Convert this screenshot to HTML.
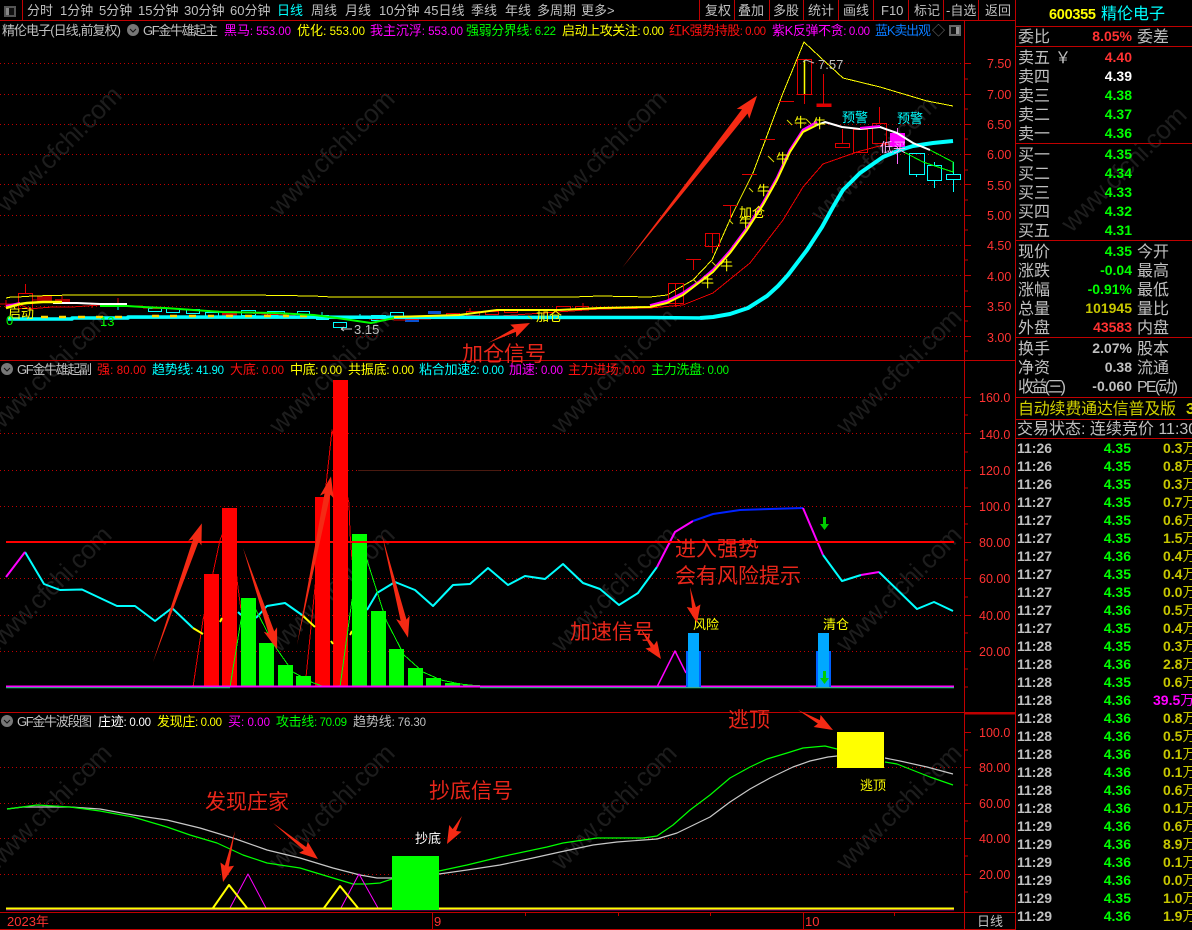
<!DOCTYPE html>
<html><head><meta charset="utf-8"><style>
html,body{margin:0;padding:0;background:#000;width:1192px;height:930px;overflow:hidden}
svg{display:block}
text{font-family:"Liberation Sans","WenQuanYi Zen Hei","Noto Sans CJK SC",sans-serif;font-size:13px;white-space:pre}
.g{fill:#c0c0c0}.r{fill:#ff3232}.R{fill:#ff1010}.y{fill:#ffff00}.m{fill:#ff00ff}.c{fill:#00ffff}.l{fill:#00ff00}.w{fill:#fff}
.ax text{fill:#ff3232;font-size:12.5px}
.lb{font-size:16px;fill:#c0c0c0}
.v{font-size:14px;font-weight:bold;text-anchor:end}
.t{font-size:14px;font-weight:bold;fill:#c0c0c0}
.k{font-size:14px;font-weight:bold;fill:#c8c800}
.k tspan{font-weight:normal;font-size:14px}
.an{font-size:21px;fill:#e8261a}
.wm text{font-size:26px;fill:#1d1d1d;text-anchor:middle}
.th{fill:none;stroke-width:1;shape-rendering:crispEdges}
.n{font-size:11.5px}
polyline{stroke-linejoin:round}
</style></head><body>
<svg width="1192" height="930" viewBox="0 0 1192 930" xmlns="http://www.w3.org/2000/svg">
<rect width="1192" height="930" fill="#000"/>
<g class="wm">
<text transform="translate(65 155) rotate(-45)" textLength="165">www.cfchi.com</text>
<text transform="translate(338 159) rotate(-45)" textLength="165">www.cfchi.com</text>
<text transform="translate(610 159) rotate(-45)" textLength="165">www.cfchi.com</text>
<text transform="translate(880 165) rotate(-45)" textLength="165">www.cfchi.com</text>
<text transform="translate(1130 175) rotate(-45)" textLength="165">www.cfchi.com</text>
<text transform="translate(55 377) rotate(-45)" textLength="165">www.cfchi.com</text>
<text transform="translate(338 377) rotate(-45)" textLength="165">www.cfchi.com</text>
<text transform="translate(620 377) rotate(-45)" textLength="165">www.cfchi.com</text>
<text transform="translate(905 377) rotate(-45)" textLength="165">www.cfchi.com</text>
<text transform="translate(55 595) rotate(-45)" textLength="165">www.cfchi.com</text>
<text transform="translate(338 595) rotate(-45)" textLength="165">www.cfchi.com</text>
<text transform="translate(620 595) rotate(-45)" textLength="165">www.cfchi.com</text>
<text transform="translate(905 595) rotate(-45)" textLength="165">www.cfchi.com</text>
<text transform="translate(55 813) rotate(-45)" textLength="165">www.cfchi.com</text>
<text transform="translate(338 813) rotate(-45)" textLength="165">www.cfchi.com</text>
<text transform="translate(620 813) rotate(-45)" textLength="165">www.cfchi.com</text>
<text transform="translate(905 813) rotate(-45)" textLength="165">www.cfchi.com</text>
</g>

<!-- grid -->
<g stroke="#c00000" stroke-width="1" stroke-dasharray="1 3" fill="none">
<path d="M0 63.500H964M0 94.500H964M0 124.500H964M0 154.500H964M0 184.500H964M0 215.500H964M0 245.500H964M0 275.500H964M0 306.500H964M0 336.500H964"/>
<path d="M0 397.500H964M0 433.500H964M0 470.500H964M0 506.500H964M0 578.500H964M0 615.500H964M0 651.500H964"/>
<path d="M0 767.500H964M0 803.500H964M0 838.500H964M0 874.500H964"/>
</g>
<path d="M358 470.500H500" stroke="#4a1a10" stroke-width="1"/>

<!-- frames -->
<g fill="none" stroke="#c00000" stroke-width="1">
<path d="M0 20.500H1015M0 360.500H1015M0 712.500H1015M0 912.500H1015M0 929.500H1015"/>
<path d="M22.500 0V20M699.500 0V20M734.500 0V20M769.500 0V20M803.500 0V20M838.500 0V20M873.500 0V20M908.500 0V20M943.500 0V20M978.500 0V20"/>
<path d="M964.500 21V930M1015.500 0V930M432.500 912V930M803.500 912V930"/>
<path d="M965 713.500H1015" stroke-width="2"/>
<path d="M1015 26.500H1192M1015 46.500H1192M1015 143.500H1192M1015 240.500H1192M1015 337.500H1192M1015 397.500H1192M1015 419.500H1192M1015 438.500H1192"/>
<path d="M965 63.500h6M965 79h3M965 94.500h6M965 109h3M965 124.500h6M965 139h3M965 154.500h6M965 170h3M965 184.500h6M965 200h3M965 215.500h6M965 230h3M965 245.500h6M965 260h3M965 275.500h6M965 291h3M965 306.500h6M965 321h3M965 336.500h6M965 351h3"/>
<path d="M965 397.500h6M965 415h3M965 433.500h6M965 452h3M965 470.500h6M965 488h3M965 506.500h6M965 524h3M965 542.500h6M965 560h3M965 578.500h6M965 597h3M965 615.500h6M965 633h3M965 651.500h6M965 669h3M965 687h3"/>
<path d="M965 732.500h6M965 750h3M965 767.500h6M965 785h3M965 803.500h6M965 821h3M965 838.500h6M965 856h3M965 874.500h6M965 892h3"/>
<path d="M525.500 912v4M618.500 912v4M710.500 912v4M894.500 912v4"/>
</g>

<!-- toolbar -->
<rect x="4" y="6" width="12" height="11" fill="#555"/><rect x="6" y="8" width="8" height="7" fill="#111"/><rect x="6" y="8" width="3" height="7" fill="#888"/>
<g class="g">
<text x="27" y="15">分时</text><text x="60" y="15">1分钟</text><text x="99" y="15">5分钟</text><text x="138" y="15">15分钟</text><text x="184" y="15">30分钟</text><text x="230" y="15">60分钟</text>
<text x="277" y="15" class="c">日线</text><text x="311" y="15">周线</text><text x="345" y="15">月线</text><text x="379" y="15">10分钟</text><text x="424" y="15">45日线</text><text x="471" y="15">季线</text><text x="505" y="15">年线</text><text x="537" y="15">多周期</text><text x="581" y="15">更多&gt;</text>
<text x="705" y="15">复权</text><text x="738" y="15">叠加</text><text x="773" y="15">多股</text><text x="808" y="15">统计</text><text x="843" y="15">画线</text><text x="881" y="15">F10</text><text x="914" y="15">标记</text><text x="946" y="15">-自选</text><text x="985" y="15">返回</text>
</g>

<!-- legends -->
<text x="2" y="35" class="g" textLength="119">精伦电子(日线,前复权)</text>
<circle cx="133" cy="30" r="6" fill="#777"/><path d="M130 29l3 3 3-3" stroke="#111" fill="none"/>
<text x="143" y="35" class="g" textLength="75">GF金牛雄起主</text>
<text x="224" y="35" class="m" textLength="67">黑马<tspan class="n">: 553.00</tspan></text>
<text x="297" y="35" class="y" textLength="68">优化<tspan class="n">: 553.00</tspan></text>
<text x="370" y="35" class="m" textLength="93">我主沉浮<tspan class="n">: 553.00</tspan></text>
<text x="466" y="35" class="l" textLength="90">强弱分界线<tspan class="n">: 6.22</tspan></text>
<text x="562" y="35" class="y" textLength="102">启动上攻关注<tspan class="n">: 0.00</tspan></text>
<text x="669" y="35" class="R" textLength="97">红K强势持股<tspan class="n">: 0.00</tspan></text>
<text x="772" y="35" class="m" textLength="98">紫K反弹不贪<tspan class="n">: 0.00</tspan></text>
<text x="875" y="35" fill="#0a7aff" textLength="56">蓝K卖出观</text><text x="932" y="35" fill="#777">◇</text>
<rect x="949" y="25" width="12" height="11" fill="#666"/><rect x="951" y="27" width="8" height="7" fill="#111"/><rect x="956" y="27" width="3" height="7" fill="#999"/>

<circle cx="7" cy="369" r="6" fill="#777"/><path d="M4 368l3 3 3-3" stroke="#111" fill="none"/>
<text x="17" y="374" class="g" textLength="75">GF金牛雄起副</text>
<text x="97" y="374" class="R" textLength="49">强<tspan class="n">: 80.00</tspan></text>
<text x="152" y="374" class="c" textLength="72">趋势线<tspan class="n">: 41.90</tspan></text>
<text x="230" y="374" class="R" textLength="54">大底<tspan class="n">: 0.00</tspan></text>
<text x="290" y="374" class="y" textLength="52">中底<tspan class="n">: 0.00</tspan></text>
<text x="348" y="374" class="y" textLength="66">共振底<tspan class="n">: 0.00</tspan></text>
<text x="419" y="374" class="c" textLength="85">粘合加速<tspan class="n">2: 0.00</tspan></text>
<text x="509" y="374" class="m" textLength="54">加速<tspan class="n">: 0.00</tspan></text>
<text x="568" y="374" class="R" textLength="77">主力进场<tspan class="n">: 0.00</tspan></text>
<text x="651" y="374" class="l" textLength="78">主力洗盘<tspan class="n">: 0.00</tspan></text>

<circle cx="7" cy="721" r="6" fill="#777"/><path d="M4 720l3 3 3-3" stroke="#111" fill="none"/>
<text x="17" y="726" class="g" textLength="75">GF金牛波段图</text>
<text x="98" y="726" class="w" textLength="53">庄迹<tspan class="n">: 0.00</tspan></text>
<text x="157" y="726" class="y" textLength="65">发现庄<tspan class="n">: 0.00</tspan></text>
<text x="228" y="726" class="m" textLength="42">买<tspan class="n">: 0.00</tspan></text>
<text x="276" y="726" class="l" textLength="71">攻击线<tspan class="n">: 70.09</tspan></text>
<text x="353" y="726" class="g" textLength="73">趋势线<tspan class="n">: 76.30</tspan></text>

<!-- axes -->
<g class="ax">
<text x="987" y="68">7.50</text><text x="987" y="99">7.00</text><text x="987" y="129">6.50</text><text x="987" y="159">6.00</text><text x="987" y="190">5.50</text><text x="987" y="220">5.00</text><text x="987" y="250">4.50</text><text x="987" y="281">4.00</text><text x="987" y="311">3.50</text><text x="987" y="342">3.00</text>
<text x="979" y="402">160.0</text><text x="979" y="439">140.0</text><text x="979" y="475">120.0</text><text x="979" y="511">100.0</text><text x="979" y="547">80.00</text><text x="979" y="583">60.00</text><text x="979" y="620">40.00</text><text x="979" y="656">20.00</text>
<text x="979" y="737">100.0</text><text x="979" y="772">80.00</text><text x="979" y="808">60.00</text><text x="979" y="843">40.00</text><text x="979" y="879">20.00</text>
</g>
<text x="7" y="926" class="r">2023年</text><text x="434" y="926" class="r">9</text><text x="805" y="926" class="r">10</text>
<text x="977" y="926" class="g">日线</text>

<!-- TOP CHART candles left -->
<g fill="none" stroke="#e00000" stroke-width="1">
<rect x="18.500" y="293.500" width="14" height="15"/><path d="M25.500 284v10M6 300v8M33 300h4"/>
<path d="M92 303v5M118 298v6M62 296v3"/>
<rect x="446.500" y="313.500" width="13" height="4"/><rect x="466.500" y="311.500" width="13" height="4"/><rect x="485.500" y="311.500" width="13" height="3"/><rect x="504.500" y="309.500" width="13" height="3"/><rect x="556.500" y="306.500" width="14" height="3"/><rect x="575.500" y="306.500" width="13" height="3"/><path d="M470 308v4M583 303v5"/>
</g>
<polyline class="th" stroke="#e00000" points="0,304 18,304 30,309 40,308 53,307 72,307 100,305 130,306 143,306"/>
<rect x="37" y="296" width="15" height="6" fill="#b00000"/><rect x="55" y="299" width="15" height="3" fill="#b00000"/><rect x="222" y="311" width="15" height="5" fill="#d00000"/><rect x="428" y="311" width="13" height="3" fill="#0a50d0"/><rect x="405" y="318" width="14" height="4" fill="#0a50d0"/>
<g fill="none" stroke="#00ffff" stroke-width="1">
<rect x="148.500" y="308.500" width="13" height="3"/><rect x="166.500" y="308.500" width="13" height="4"/><rect x="186.500" y="309.500" width="13" height="4"/><rect x="205.500" y="312.500" width="13" height="4"/><rect x="241.500" y="310.500" width="14" height="5"/><rect x="267.500" y="311.500" width="17" height="4"/><rect x="297.500" y="311.500" width="12" height="3"/><rect x="316.500" y="315.500" width="12" height="4"/><rect x="333.500" y="322.500" width="13" height="5"/><rect x="371.500" y="315.500" width="14" height="5"/><rect x="390.500" y="312.500" width="13" height="5"/>
<path d="M118 304v6M322 312v7M360 314v5"/>
</g>
<!-- TOP thin lines -->
<polyline class="th" stroke="#ffff00" points="6,298 11,297 18,297 33,296 72,295 250,295 313,296 332,297 573,297 600,296 650,297 667,295 693,280 712,260 733,213 753,173 783,93 804,42 820,57 843,78 880,87 927,101 953,106"/>
<polyline class="th" stroke="#ee0000" points="143,308 180,309 300,316 400,320 500,316 600,309 650,308 683,305 713,293 750,263 783,220 803,187 823,164 857,152 883,145 895,143"/>
<!-- candles right -->
<g fill="none" stroke="#e00000" stroke-width="1">
<rect x="668.500" y="283.500" width="15" height="20"/><path d="M675.500 283v24"/>
<path d="M686 259.500h15M693.500 259v11"/>
<rect x="705.500" y="233.500" width="14" height="13"/><path d="M712.500 233v20"/>
<path d="M723 205.500h15M730.500 205v14M742 174.500h15M760 139.500h15M779 101.500h15"/>
<rect x="797.500" y="59.500" width="14" height="35"/><path d="M804.500 94v10"/>
<path d="M823.500 74v31"/><rect x="817" y="104" width="14" height="2.500" fill="#e00000"/>
<path d="M842.500 129v14"/><rect x="835.500" y="143.500" width="14" height="4"/>
<rect x="853.500" y="129.500" width="14" height="23"/>
<rect x="872.500" y="123.500" width="14" height="20"/><path d="M879.500 107v16"/>
</g>
<path d="M804.500 60v34" stroke="#ffff00" stroke-width="1.500"/>
<path d="M897.500 128v36" stroke="#ff66ff"/><rect x="890" y="133" width="15" height="14" fill="#ff00ff"/>
<g fill="none" stroke="#00ffff" stroke-width="1">
<rect x="909.500" y="153.500" width="15" height="21"/><path d="M916.500 174v3"/>
<rect x="927.500" y="165.500" width="14" height="15"/><path d="M934.500 181v7M934.500 162v3"/>
<rect x="946.500" y="174.500" width="14" height="5"/><path d="M953.500 162v12M953.500 180v12"/>
</g>
<!-- thick lines -->
<polyline fill="none" stroke="#00ffff" stroke-width="3.500" points="8,319 72,319 72,318 128,318 128,317 650,317.500 700,318"/>
<polyline fill="none" stroke="#00ffff" stroke-width="4" points="700,318 713,317 730,314 748,308 767,296 778,286 788,275 807,250 822,227 833,207 843,190 860,173 883,157 900,150 913,146 933,143 953,141"/>
<path d="M41 317h7M59 317h7M78 317h7M96 317h7M115 317h7M152 316h7M170 316h7M189 316h7M208 316h6M226 316h7M245 316h7M264 316h7M283 316h6M300 316h7" stroke="#ffd800" stroke-width="2.500"/>
<polyline fill="none" stroke="#00ff00" stroke-width="2" points="100,306 127,306 143,307 165,308 222,312 275,313 314,315 337,318 371,323 394,318"/>
<polyline fill="none" stroke="#ffffff" stroke-width="2" points="53,303 77,303 100,304 127,304"/>
<polyline fill="none" stroke="#ff00ff" stroke-width="2" points="6,306 20,303"/>
<polyline fill="none" stroke="#ffff00" stroke-width="2.500" points="6,308 20,304 27,303 43,302 62,302"/>
<polyline fill="none" stroke="#ff00ff" stroke-width="2.500" points="650,305.500 667,301 683,293 700,281 713,270 730,251 747,228 763,203 777,178 790,150 803,130 817,122"/>
<polyline fill="none" stroke="#ffff00" stroke-width="2" points="394,317 459,315 497,310 559,310 600,308 650,307 667,303 683,295 700,282 713,272 730,253 747,230 763,205 777,180 790,152 803,132 817,125"/>
<polyline fill="none" stroke="#ffffff" stroke-width="2" points="817,125 825,122 842,127 860,129 880,127 897,133 913,143 930,150"/>
<polyline fill="none" stroke="#ff00ff" stroke-width="2" points="860,128 880,126"/>
<polyline class="th" stroke="#00ff00" points="930,150 953,162 953,172 923,162 900,150"/>
<!-- top labels -->
<g class="y">
<text x="701" y="287">牛</text><text x="720" y="270">牛</text><text x="739" y="227">牛</text><text x="757" y="195">牛</text><text x="776" y="163">牛</text><text x="794" y="127">牛</text><text x="813" y="128">牛</text>
<text x="739" y="217">加仓</text>
<text x="8" y="318" font-size="12">启动</text><text x="536" y="321">加仓</text>
</g>
<path d="M697 283l-4-4M716 266l-4-4M733 224l-4-4M753 192l-4-4M774 162l-6-6M792 125l-5-5M811 124l-5-5M532 319l-4-3" stroke="#d8d800" fill="none"/>
<text x="842" y="122" class="c">预警</text><text x="897" y="123" class="c">预警</text>
<text x="880" y="152" fill="#ffb0ff">低买</text>
<text x="818" y="69" class="g">7.57</text><path d="M803 62l3-2 8 3" stroke="#bbb" fill="none"/>
<text x="6" y="325" class="l" font-size="12">0</text><text x="100" y="326" class="l" font-size="12">13</text>
<text x="354" y="334" class="g">3.15</text><path d="M341 329h11M341 329l3-2M341 329l3 2" stroke="#ccc" fill="none"/>

<!-- MID CHART -->
<polyline class="th" stroke="#ee0000" points="193,687 203,620 220,540 232,510 237,580 241,610"/>
<polyline class="th" stroke="#ee0000" points="305,687 315,587 332,430 349,503 350,533 352,560"/>
<g fill="#ff0000">
<rect x="204" y="574" width="15" height="113"/><rect x="222" y="508" width="15" height="179"/><rect x="315" y="497" width="15" height="190"/><rect x="333" y="380" width="15" height="307"/>
</g>
<polyline fill="none" stroke="#00ffff" stroke-width="2" points="25,552 44,584 60,590 82,589.500 117,606 135,606 155,621 172,608 193,628"/>
<polyline fill="none" stroke="#ff00ff" stroke-width="2" points="6,577 25,552"/>
<polyline fill="none" stroke="#ffff00" stroke-width="2" points="193,628 203,634"/>
<path d="M220 622l2-4" stroke="#ffff00" stroke-width="2"/>
<polyline fill="none" stroke="#00ffff" stroke-width="2" points="238,612 241,615"/>
<polyline fill="none" stroke="#00ffff" stroke-width="2" points="256,618 267,606 285,603 302,615"/>
<polyline fill="none" stroke="#ffff00" stroke-width="2" points="302,615 315,627"/>
<path d="M331 641l2 3M350 635l2-4" stroke="#ffff00" stroke-width="2"/>
<polyline fill="none" stroke="#00ffff" stroke-width="2" points="367,610 377,593 395,582 415,590 433,606 453,585 470,584 488,568 508,585 525,576 545,579 563,564 583,583 600,589 619,605 638,593 657,567"/>
<polyline fill="none" stroke="#ff00ff" stroke-width="2" points="657,567 675,532 693,521"/>
<polyline fill="none" stroke="#0022ff" stroke-width="2" points="693,521 713,514 740,510 770,509 803,508"/>
<polyline fill="none" stroke="#ff00ff" stroke-width="2" points="803,508 823,555"/>
<polyline fill="none" stroke="#00ffff" stroke-width="2" points="823,555 842,581 861,575"/>
<polyline fill="none" stroke="#ff00ff" stroke-width="2" points="861,575 879,572"/>
<polyline fill="none" stroke="#00ffff" stroke-width="2" points="879,572 917,609 934,602 953,611"/>
<g fill="#00ff00">
<rect x="241" y="598" width="15" height="89"/><rect x="259" y="643" width="15" height="44"/><rect x="278" y="665" width="15" height="22"/><rect x="296" y="676" width="15" height="11"/>
<rect x="352" y="534" width="15" height="153"/><rect x="371" y="611" width="15" height="76"/><rect x="389" y="649" width="15" height="38"/><rect x="408" y="668" width="15" height="19"/><rect x="426" y="678" width="15" height="9"/><rect x="445" y="683" width="15" height="4"/><rect x="463" y="685" width="17" height="2"/>
</g>
<polyline class="th" stroke="#00ff00" points="230,687 241,620 256,610 274,645 293,672 311,682 325,687 340,687 352,600 367,560 386,620 404,655 423,672 441,680 460,684 480,686"/>
<path d="M6 686.500H954" stroke="#ff00ff" stroke-width="2"/>
<path d="M6 687.700H230M480 687.700H954" stroke="#00dd66" stroke-width="1"/>
<path d="M6 542H954" stroke="#ff0000" stroke-width="2"/>
<polyline fill="none" stroke="#ff00ff" stroke-width="1.500" points="657,687 675,651 686,673"/>
<rect x="686" y="651" width="15" height="36" fill="#0060ff"/><rect x="688" y="633" width="11" height="54" fill="#00a8ff"/>
<rect x="816" y="651" width="15" height="36" fill="#0060ff"/><rect x="818" y="633" width="11" height="54" fill="#00a8ff"/>
<path d="M823 517h3v7h3l-4.500 6-4.500-6h3zM823 671h3v7h3l-4.500 6-4.500-6h3z" fill="#00cc00"/>
<text x="693" y="629" class="y" font-size="12">风险</text><text x="823" y="629" class="y" font-size="12">清仓</text>

<!-- BOTTOM CHART -->
<polyline fill="none" stroke="#c8c8c8" stroke-width="1.200" points="7,809 23,807 70,807 100,809 133,815 167,820 200,828 233,838 267,850 300,858 333,868 360,875 377,878 392,878"/>
<polyline fill="none" stroke="#00ff00" stroke-width="1.200" points="7,809 37,805 70,807 100,811 133,817 167,827 190,835 217,843 243,855 267,863 300,868 333,878 353,884 367,884 380,883 392,879"/>
<polyline fill="none" stroke="#c8c8c8" stroke-width="1.200" points="439,874 467,870 500,865 533,858 560,852 593,845 617,842 657,839 677,833 710,817 730,802 750,789 770,778 793,767 810,761 828,757 837,756"/>
<polyline fill="none" stroke="#00ff00" stroke-width="1.200" points="439,871 467,865 500,857 547,847 563,843 597,838 643,838 657,836 673,825 690,810 710,795 730,778 750,767 767,759 787,753 803,748 825,746 837,749"/>
<polyline fill="none" stroke="#c8c8c8" stroke-width="1.200" points="885,758 900,761 927,767 953,774"/>
<polyline fill="none" stroke="#00ff00" stroke-width="1.200" points="885,762 897,764 930,777 953,785"/>
<polyline fill="none" stroke="#ff00ff" points="230,908 248,874 266,908"/>
<polyline fill="none" stroke="#ff00ff" points="341,908 359,874 378,908"/>
<polyline fill="none" stroke="#ffff00" stroke-width="2" points="213,908 229,885 247,908"/>
<polyline fill="none" stroke="#ffff00" stroke-width="2" points="324,908 340,886 358,908"/>
<path d="M6 908.500H954" stroke="#ffff00" stroke-width="2"/>
<path d="M6 910H954" stroke="#ff00ff" stroke-width="0.600"/>
<rect x="392" y="856" width="47" height="54" fill="#00ff00"/>
<rect x="837" y="732" width="47" height="36" fill="#ffff00"/>
<text x="415" y="843" class="w" font-size="12">抄底</text><text x="860" y="790" class="y" font-size="12">逃顶</text>

<!-- arrows -->
<g fill="#f42a14">
<polygon transform="translate(622 268) rotate(-51.900)" points="0,0 199,-3.500 196,-8 219,0 196,8 199,3.500"/>
<polygon transform="translate(488 343) rotate(-25.500)" points="0,0 30,-2 28,-7 46.500,0 28,7 30,2"/>
<polygon transform="translate(153 662) rotate(-70.600)" points="0,0 129,-3 126,-7 147,0 126,7 129,3"/>
<polygon transform="translate(243 548) rotate(71.400)" points="0,0 89,-3 86,-7 107,0 86,7 89,3"/>
<polygon transform="translate(297 645) rotate(-78.600)" points="0,0 154,-3 151,-7 172,0 151,7 154,3"/>
<polygon transform="translate(382 535) rotate(75.800)" points="0,0 88,-3 85,-7 106,0 85,7 88,3"/>
<polygon transform="translate(640 628) rotate(55.900)" points="0,0 22,-2 20,-7 37.400,0 20,7 22,2"/>
<polygon transform="translate(690 587) rotate(79)" points="0,0 21,-2 19,-7 36.700,0 19,7 21,2"/>
<polygon transform="translate(235 831) rotate(103.200)" points="0,0 36,-2 34,-7 52.400,0 34,7 36,2"/>
<polygon transform="translate(273 823) rotate(38.700)" points="0,0 41,-2 39,-7 57.600,0 39,7 41,2"/>
<polygon transform="translate(462 816) rotate(118.200)" points="0,0 16,-2 14,-7 31.800,0 14,7 16,2"/>
<polygon transform="translate(798 710) rotate(29.700)" points="0,0 24,-2 22,-7 40.300,0 22,7 24,2"/>
</g>
<g>
<text x="462" y="361" class="an">加仓信号</text>
<text x="675" y="556" class="an">进入强势</text>
<text x="675" y="583" class="an">会有风险提示</text>
<text x="570" y="639" class="an">加速信号</text>
<text x="205" y="809" class="an">发现庄家</text>
<text x="429" y="798" class="an">抄底信号</text>
<text x="728" y="727" class="an">逃顶</text>
</g>

<!-- RIGHT PANEL -->
<text x="1049" y="19" font-weight="bold" class="y" style="font-size:14.500px" textLength="47">600355</text>
<text x="1101" y="19" class="c" style="font-size:16px">精伦电子</text>
<g>
<text class="lb" x="1018" y="42">委比</text><text class="lb" x="1137" y="42">委差</text>
<text class="lb" x="1018" y="63">卖五</text><text class="lb" x="1055" y="63">￥</text><text class="lb" x="1018" y="82">卖四</text><text class="lb" x="1018" y="101">卖三</text><text class="lb" x="1018" y="120">卖二</text><text class="lb" x="1018" y="139">卖一</text>
<text class="lb" x="1018" y="160">买一</text><text class="lb" x="1018" y="179">买二</text><text class="lb" x="1018" y="198">买三</text><text class="lb" x="1018" y="217">买四</text><text class="lb" x="1018" y="236">买五</text>
<text class="lb" x="1018" y="257">现价</text><text class="lb" x="1018" y="276">涨跌</text><text class="lb" x="1018" y="295">涨幅</text><text class="lb" x="1018" y="314">总量</text><text class="lb" x="1018" y="333">外盘</text>
<text class="lb" x="1137" y="257">今开</text><text class="lb" x="1137" y="276">最高</text><text class="lb" x="1137" y="295">最低</text><text class="lb" x="1137" y="314">量比</text><text class="lb" x="1137" y="333">内盘</text>
<text class="lb" x="1018" y="354">换手</text><text class="lb" x="1018" y="373">净资</text><text class="lb" x="1018" y="392" textLength="48">收益(三)</text>
<text class="lb" x="1137" y="354">股本</text><text class="lb" x="1137" y="373">流通</text><text class="lb" x="1137" y="392" textLength="41">PE(动)</text>
<text class="lb" x="1018" y="414" style="fill:#d0d000" textLength="158">自动续费通达信普及版</text><text class="lb" x="1186" y="414" style="fill:#d0d000;font-weight:bold">3</text>
<text class="lb" x="1017" y="434">交易状态: 连续竞价 11:30</text>
</g>
<g>
<text class="v r" x="1132" y="41">8.05%</text>
<text class="v r" x="1132" y="62">4.40</text><text class="v w" x="1132" y="81">4.39</text><text class="v l" x="1132" y="100">4.38</text><text class="v l" x="1132" y="119">4.37</text><text class="v l" x="1132" y="138">4.36</text>
<text class="v l" x="1132" y="159">4.35</text><text class="v l" x="1132" y="178">4.34</text><text class="v l" x="1132" y="197">4.33</text><text class="v l" x="1132" y="216">4.32</text><text class="v l" x="1132" y="235">4.31</text>
<text class="v l" x="1132" y="256">4.35</text><text class="v l" x="1132" y="275">-0.04</text><text class="v l" x="1132" y="294">-0.91%</text><text class="v" style="fill:#c8c800" x="1132" y="313">101945</text><text class="v r" x="1132" y="332">43583</text>
<text class="v g" x="1132" y="353">2.07%</text><text class="v g" x="1132" y="372">0.38</text><text class="v g" x="1132" y="391">-0.060</text>
</g>
<g id="ticks">
<text class="t" x="1017" y="453">11:26</text><text class="v l" x="1131" y="453">4.35</text><text class="k" x="1163" y="453">0.3<tspan>万</tspan></text>
<text class="t" x="1017" y="471">11:26</text><text class="v l" x="1131" y="471">4.35</text><text class="k" x="1163" y="471">0.8<tspan>万</tspan></text>
<text class="t" x="1017" y="489">11:26</text><text class="v l" x="1131" y="489">4.35</text><text class="k" x="1163" y="489">0.3<tspan>万</tspan></text>
<text class="t" x="1017" y="507">11:27</text><text class="v l" x="1131" y="507">4.35</text><text class="k" x="1163" y="507">0.7<tspan>万</tspan></text>
<text class="t" x="1017" y="525">11:27</text><text class="v l" x="1131" y="525">4.35</text><text class="k" x="1163" y="525">0.6<tspan>万</tspan></text>
<text class="t" x="1017" y="543">11:27</text><text class="v l" x="1131" y="543">4.35</text><text class="k" x="1163" y="543">1.5<tspan>万</tspan></text>
<text class="t" x="1017" y="561">11:27</text><text class="v l" x="1131" y="561">4.36</text><text class="k" x="1163" y="561">0.4<tspan>万</tspan></text>
<text class="t" x="1017" y="579">11:27</text><text class="v l" x="1131" y="579">4.35</text><text class="k" x="1163" y="579">0.4<tspan>万</tspan></text>
<text class="t" x="1017" y="597">11:27</text><text class="v l" x="1131" y="597">4.35</text><text class="k" x="1163" y="597">0.0<tspan>万</tspan></text>
<text class="t" x="1017" y="615">11:27</text><text class="v l" x="1131" y="615">4.36</text><text class="k" x="1163" y="615">0.5<tspan>万</tspan></text>
<text class="t" x="1017" y="633">11:27</text><text class="v l" x="1131" y="633">4.35</text><text class="k" x="1163" y="633">0.4<tspan>万</tspan></text>
<text class="t" x="1017" y="651">11:28</text><text class="v l" x="1131" y="651">4.35</text><text class="k" x="1163" y="651">0.3<tspan>万</tspan></text>
<text class="t" x="1017" y="669">11:28</text><text class="v l" x="1131" y="669">4.36</text><text class="k" x="1163" y="669">2.8<tspan>万</tspan></text>
<text class="t" x="1017" y="687">11:28</text><text class="v l" x="1131" y="687">4.35</text><text class="k" x="1163" y="687">0.6<tspan>万</tspan></text>
<text class="t" x="1017" y="705">11:28</text><text class="v l" x="1131" y="705">4.36</text><text class="k" style="fill:#ff00ff" x="1153" y="705">39.5<tspan>万</tspan></text>
<text class="t" x="1017" y="723">11:28</text><text class="v l" x="1131" y="723">4.36</text><text class="k" x="1163" y="723">0.8<tspan>万</tspan></text>
<text class="t" x="1017" y="741">11:28</text><text class="v l" x="1131" y="741">4.36</text><text class="k" x="1163" y="741">0.5<tspan>万</tspan></text>
<text class="t" x="1017" y="759">11:28</text><text class="v l" x="1131" y="759">4.36</text><text class="k" x="1163" y="759">0.1<tspan>万</tspan></text>
<text class="t" x="1017" y="777">11:28</text><text class="v l" x="1131" y="777">4.36</text><text class="k" x="1163" y="777">0.1<tspan>万</tspan></text>
<text class="t" x="1017" y="795">11:28</text><text class="v l" x="1131" y="795">4.36</text><text class="k" x="1163" y="795">0.6<tspan>万</tspan></text>
<text class="t" x="1017" y="813">11:28</text><text class="v l" x="1131" y="813">4.36</text><text class="k" x="1163" y="813">0.1<tspan>万</tspan></text>
<text class="t" x="1017" y="831">11:29</text><text class="v l" x="1131" y="831">4.36</text><text class="k" x="1163" y="831">0.6<tspan>万</tspan></text>
<text class="t" x="1017" y="849">11:29</text><text class="v l" x="1131" y="849">4.36</text><text class="k" x="1163" y="849">8.9<tspan>万</tspan></text>
<text class="t" x="1017" y="867">11:29</text><text class="v l" x="1131" y="867">4.36</text><text class="k" x="1163" y="867">0.1<tspan>万</tspan></text>
<text class="t" x="1017" y="885">11:29</text><text class="v l" x="1131" y="885">4.36</text><text class="k" x="1163" y="885">0.0<tspan>万</tspan></text>
<text class="t" x="1017" y="903">11:29</text><text class="v l" x="1131" y="903">4.35</text><text class="k" x="1163" y="903">1.0<tspan>万</tspan></text>
<text class="t" x="1017" y="921">11:29</text><text class="v l" x="1131" y="921">4.36</text><text class="k" x="1163" y="921">1.9<tspan>万</tspan></text>
</g>
</svg>
</body></html>
